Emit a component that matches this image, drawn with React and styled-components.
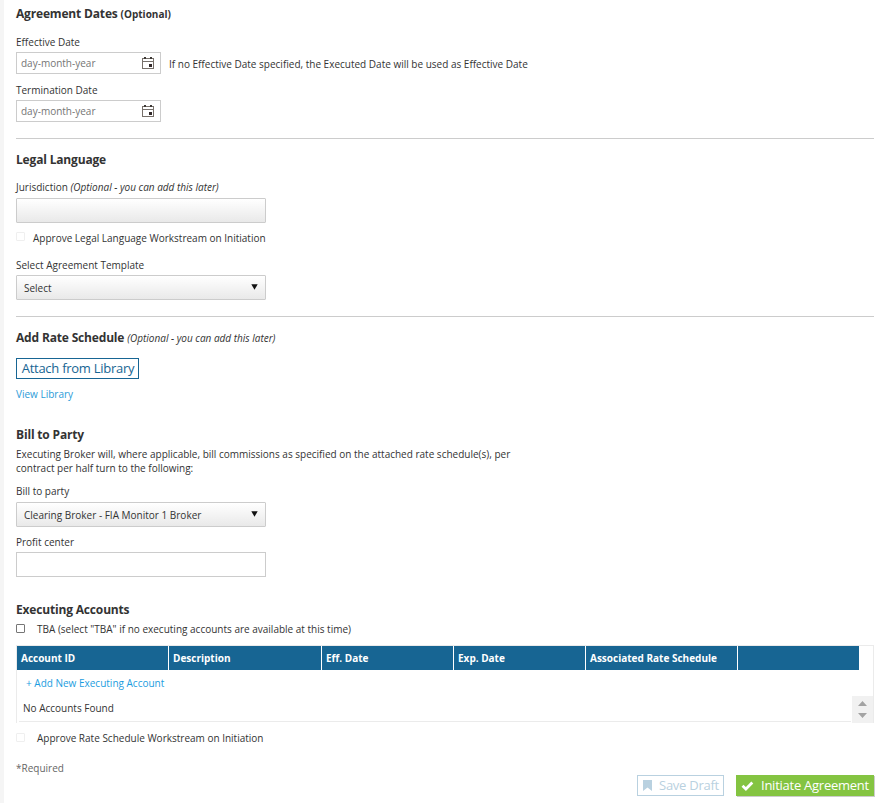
import React from 'react'
import styled, { createGlobalStyle } from 'styled-components';

const columns = ['Account ID', 'Description', 'Eff. Date', 'Exp. Date', 'Associated Rate Schedule', ''];

function DateInput() {
  return (
    <DateBox>
        <Placeholder>day-month-year</Placeholder>
        <svg width="12" height="12" viewBox="0 0 12 12" shapeRendering="crispEdges">
            <path d="M.5 1.5h11v10H.5z" fill="#fff" stroke="#77706a" />
            <path d="M0 4h12v1H0z" fill="#77716c" />
            <path d="M2 0h2v2H2zM8 0h2v2H8z" fill="#3d3936" />
            <path d="M7 7h3v3H7z" fill="#33292a" />
        </svg>
    </DateBox>
  )
}

function Dropdown({ children }) {
  return (
    <SelectBox>
        <span>{children}</span>
        <svg width="7" height="6" viewBox="0 0 7 6">
            <path d="M0.3 0.3h6.4L3.5 5.8z" fill="#111" />
        </svg>
    </SelectBox>
  )
}

function App() {
  return (
    <>
      <GlobalStyle />
      <Page>
        <Title>Agreement Dates <Note>(Optional)</Note></Title>
        <Label $top={12}>Effective Date</Label>
        <DateRow>
            <DateInput />
            <Hint>If no Effective Date specified, the Executed Date will be used as Effective Date</Hint>
        </DateRow>
        <Label $top={10}>Termination Date</Label>
        <DateRow>
            <DateInput />
        </DateRow>
        <Divider />

        <Title $top={11}>Legal Language</Title>
        <Label $top={11}>Jurisdiction <em>(Optional - you can add this later)</em></Label>
        <Jurisdiction />
        <CheckRow $top={9} $gap={8}>
            <Check $disabled $top={0} />
            <span>Approve Legal Language Workstream on Initiation</span>
        </CheckRow>
        <Label $top={13}>Select Agreement Template</Label>
        <Dropdown>Select</Dropdown>
        <Divider />

        <Title $top={11}>Add Rate Schedule <OptionalNote>(Optional - you can add this later)</OptionalNote></Title>
        <LibraryButton>Attach from Library</LibraryButton>
        <Link>View Library</Link>

        <Title $top={23}>Bill to Party</Title>
        <Paragraph>
            Executing Broker will, where applicable, bill commissions as specified on the attached rate schedule(s), per<br />
            contract per half turn to the following:
        </Paragraph>
        <Label $top={9} $bottom={3}>Bill to party</Label>
        <Dropdown>Clearing Broker - FIA Monitor 1 Broker</Dropdown>
        <Label $top={9}>Profit center</Label>
        <TextInput />

        <Title $top={23}>Executing Accounts</Title>
        <CheckRow $top={3} $gap={12}>
            <Check $top={1} />
            <span>TBA (select "TBA" if no executing accounts are available at this time)</span>
        </CheckRow>
        <Table>
            <HeadRow>
                {columns.map((name, i) => <HeadCell key={i}>{name}</HeadCell>)}
            </HeadRow>
            <TableBody>
                <Rows>
                    <AddRow>+ Add New Executing Account</AddRow>
                    <EmptyRow>No Accounts Found</EmptyRow>
                </Rows>
                <Scroller>
                    <svg width="9" height="17" viewBox="0 0 9 17">
                        <path d="M0 5h9L4.5 0zM0 12h9l-4.5 5z" fill="#a3a3a3" />
                    </svg>
                </Scroller>
            </TableBody>
        </Table>
        <CheckRow $top={9} $gap={12}>
            <Check $disabled $top={1} />
            <span>Approve Rate Schedule Workstream on Initiation</span>
        </CheckRow>
        <Required>*Required</Required>
        <Actions>
            <SaveButton>
                <svg width="9" height="11" viewBox="0 0 9 11">
                    <path d="M0 0h9v11L4.5 7.5 0 11z" fill="#b9d1e0" />
                </svg>
                <span>Save Draft</span>
            </SaveButton>
            <InitiateButton>
                <svg width="13" height="10" viewBox="0 0 13 10">
                    <path d="M1.5 4.8l3.4 3.2 6.4-6.4" fill="none" stroke="#fff" strokeWidth="2.8" />
                </svg>
                <span>Initiate Agreement</span>
            </InitiateButton>
        </Actions>
      </Page>
    </>
  )
}

const GlobalStyle = createGlobalStyle`
    * {
        box-sizing: border-box;
    }

    body {
        margin: 0;
        background: #fff;
        overflow: hidden;
    }
`

const Page = styled.div`
    height: 803px;
    padding: 4px 9px 0 12px;
    border-left: 4px solid #f5f5f5;
    color: #333;
    font-family: "Open Sans", sans-serif;
    font-size: 10px;
    line-height: 12px;
    white-space: nowrap;
`

const Title = styled.h3`
    margin: ${props => props.$top || 0}px 0 0;
    height: 20px;
    font-size: 12px;
    line-height: 20px;
    font-weight: 700;
    letter-spacing: -0.17px;
`

const Note = styled.span`
    font-size: 10px;
    letter-spacing: 0;
`

const OptionalNote = styled.em`
    font-size: 10px;
    font-weight: 400;
    letter-spacing: 0;
`

const Label = styled.div`
    margin-top: ${props => props.$top}px;
    margin-bottom: ${props => props.$bottom || 2}px;
    height: 14px;
`

const DateRow = styled.div`
    display: flex;
    align-items: center;
    height: 22px;
`

const DateBox = styled.div`
    display: flex;
    align-items: center;
    justify-content: space-between;
    width: 145px;
    height: 22px;
    padding: 0 6px 0 4px;
    border: 1px solid #ccc;
`

const Placeholder = styled.span`
    color: #757575;
`

const Hint = styled.span`
    margin-left: 8px;
    padding-top: 2px;
`

const Divider = styled.hr`
    height: 1px;
    margin: 16px 0 0;
    border: 0;
    background: #ccc;
`

const Field = styled.div`
    width: 250px;
    height: 25px;
    border: 1px solid #ccc;
`

const TextInput = styled(Field)`
    background: #fff;
`

const SelectBox = styled(Field)`
    display: flex;
    align-items: center;
    justify-content: space-between;
    padding: 2px 7px 1px;
    border-radius: 1px;
    background: linear-gradient(#fff, #e9e9e9);

    svg {
        margin-bottom: 2px;
    }
`

const Jurisdiction = styled(SelectBox)`
    margin-top: 3px;
`

const CheckRow = styled.div`
    display: flex;
    gap: ${props => props.$gap}px;
    height: 14px;
    margin-top: ${props => props.$top}px;
`

const Check = styled.span`
    width: 9px;
    height: 9px;
    margin-top: ${props => props.$top}px;
    border: 1px solid ${props => props.$disabled ? '#efefef' : '#767676'};
    border-radius: 1px;
    background: #fff;
`

const LibraryButton = styled.button`
    display: block;
    width: 123px;
    height: 21px;
    margin-top: 10px;
    padding: 0 0 0 1px;
    border: 1px solid #176593;
    background: #fff;
    color: #176593;
    font: 13px/19px "Open Sans", sans-serif;
    letter-spacing: -0.26px;
`

const Link = styled.div`
    height: 14px;
    margin-top: 9px;
    color: #2b9bd8;
`

const Paragraph = styled.p`
    margin: 2px 0 0;
    padding-bottom: 1px;
    line-height: 14px;
`

const Table = styled.div`
    height: 78px;
    margin-top: 8px;
    border: 1px solid #ebebeb;
    border-bottom: 0;
`

const HeadRow = styled.div`
    display: grid;
    grid-template-columns: 151px 152px 131px 131px 151px 121px;
    column-gap: 1px;
    width: 842px;
    height: 24px;
`

const HeadCell = styled.div`
    padding-left: 4px;
    background: #176593;
    color: #fff;
    font-weight: 700;
    line-height: 24px;
`

const TableBody = styled.div`
    display: flex;
    align-items: flex-end;
    height: 53px;
`

const Rows = styled.div`
    width: 832px;
    height: 50px;
    margin: 0 1px 1px 2px;
    border-bottom: 1px solid #ebebeb;
`

const AddRow = styled.div`
    height: 25px;
    padding: 5px 0 0 7px;
    color: #1b9de0;
`

const EmptyRow = styled.div`
    padding: 5px 0 0 4px;
`

const Scroller = styled.div`
    display: flex;
    align-items: center;
    justify-content: center;
    width: 21px;
    height: 27px;
    background: #f1f1f1;
`

const Required = styled.div`
    height: 14px;
    margin-top: 16px;
    color: #666;
`

const Actions = styled.div`
    display: flex;
    justify-content: flex-end;
    gap: 12px;
    margin-top: -1px;
`

const ActionButton = styled.button`
    display: flex;
    align-items: center;
    height: 21px;
    font: 13px/19px "Open Sans", sans-serif;
    letter-spacing: -0.25px;
`

const SaveButton = styled(ActionButton)`
    gap: 7px;
    width: 87px;
    padding: 0 0 0 5px;
    border: 1px solid #b9d1e0;
    background: #fff;
    color: #b9d1e0;
`

const InitiateButton = styled(ActionButton)`
    gap: 7px;
    width: 138px;
    padding: 0 0 0 5px;
    border: 0;
    background: #84c441;
    box-shadow: 1px 1px 0 #ccc;
    color: #fff;
`

export default App
